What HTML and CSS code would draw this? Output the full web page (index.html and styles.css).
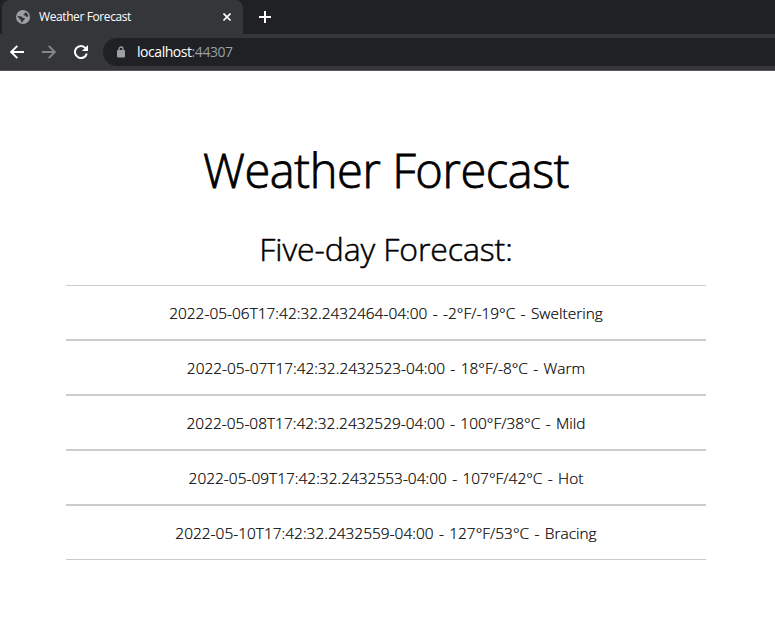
FILE: index.html
```
<!DOCTYPE html>
<html lang="en">
<head>
<meta charset="utf-8">
<title>Weather Forecast</title>
<link rel="stylesheet" href="styles.css">
</head>
<body>
<header class="browser">
  <div class="tabs">
    <div class="tab">
      <svg class="globe" width="14" height="14" viewBox="0 0 14 14"><circle cx="7" cy="7" r="7" fill="#9aa0a6"/><path d="M1.800 6 5.500 6.400 6.700 7.800 8.800 8 8.600 9.600 7.300 10.400 6.600 12.300 5 12 5 10 3.400 9.200 3.300 8 1.700 7.500ZM7.200 1.700 9.500 2 8.900 3.400 7.600 4 7.500 5.300 9.200 5.500 10 6.700 12.300 6.800 12.200 5 10.800 2.900 9.400 2Z" fill="#35363a"/></svg>
      <span class="tab-title">Weather Forecast</span>
      <svg class="close" width="8" height="8" viewBox="0 0 8 8"><path d="M.5.5l7 7M7.500.5l-7 7" stroke="#fff" stroke-width="1.6"/></svg>
    </div>
    <svg class="plus" width="12" height="12" viewBox="0 0 12 12"><path d="M6 0v12M0 6h12" stroke="#fff" stroke-width="2"/></svg>
  </div>
  <div class="toolbar">
    <svg class="nav" width="14" height="14" viewBox="0 0 14 14"><path d="M14 7H1.500M7.300.8 1.200 7l6.100 6.200" fill="none" stroke="#fff" stroke-width="1.900"/></svg>
    <svg class="nav" width="14" height="14" viewBox="0 0 14 14"><path d="M0 7h12.500M6.700.8 12.800 7l-6.100 6.200" fill="none" stroke="#85868a" stroke-width="1.900"/></svg>
    <svg class="nav reload" width="14" height="14" viewBox="0 0 14 14"><path d="M11.700 3.300A6 6 0 1 0 12.800 8.500" fill="none" stroke="#fff" stroke-width="2"/><path d="M14 0v6H8Z" fill="#fff"/></svg>
    <div class="address">
      <svg width="8" height="12" viewBox="0 0 8 12"><path d="M2 5V3a2 2 0 0 1 4 0v2" fill="none" stroke="#9aa0a6" stroke-width="1.300"/><rect y="4" width="8" height="7.500" rx="1" fill="#9aa0a6"/></svg>
      <span class="url"><span class="host">localhost</span><span class="port">:44307</span></span>
    </div>
  </div>
</header>
<main class="page">
  <h1>Weather Forecast</h1>
  <h2>Five-day Forecast:</h2>
  <ul class="forecast">
    <li>2022-05-06T17:42:32.2432464-04:00 - -2°F/-19°C - Sweltering</li>
    <li>2022-05-07T17:42:32.2432523-04:00 - 18°F/-8°C - Warm</li>
    <li>2022-05-08T17:42:32.2432529-04:00 - 100°F/38°C - Mild</li>
    <li>2022-05-09T17:42:32.2432553-04:00 - 107°F/42°C - Hot</li>
    <li>2022-05-10T17:42:32.2432559-04:00 - 127°F/53°C - Bracing</li>
  </ul>
</main>
</body>
</html>
```
FILE: styles.css
```
* { box-sizing: border-box; }
body { margin: 0; background: #fff; color: #000; font-family: "Open Sans", "Noto Sans", sans-serif; overflow: hidden; }
svg { display: block; flex: none; }
.browser { height: 71px; background: #35363a; border-bottom: 1px solid #5b565d; }
.tabs { display: flex; align-items: center; height: 34px; background: #202124; }
.tab { display: flex; align-items: center; width: 241px; height: 34px; margin-left: 2px; padding: 0 12px 0 14px; background: #35363a; border-radius: 8px 8px 0 0; }
.tab-title { margin-left: 9px; flex: 1; color: #fff; font-size: 12px; letter-spacing: -0.4px; line-height: 16px; padding-bottom: 1px; white-space: nowrap; }
.plus { margin-left: 16px; }
.toolbar { display: flex; align-items: center; height: 36px; padding-left: 10px; }
.nav { margin-right: 18px; }
.reload { margin-right: 15px; }
.address { display: flex; align-items: center; flex: 1; height: 28px; padding-left: 14px; background: #202124; border-radius: 14px 0 0 14px; }
.url { margin-left: 12px; padding-bottom: 1px; font-size: 14px; letter-spacing: -0.45px; color: #fff; }
.port { color: #9aa0a6; }
.page { width: 640px; margin: 0 auto; position: relative; left: -1.5px; padding-top: 67px; text-align: center; }
h1, h2 { margin: 0; font-weight: 300; white-space: nowrap; }
h1 { font-size: 47px; line-height: 65px; letter-spacing: -0.4px; -webkit-text-stroke: 0.8px #000; }
h2 { margin-top: 24px; font-size: 32px; line-height: 44px; letter-spacing: -0.1px; -webkit-text-stroke: 0.5px #000; }
.forecast { list-style: none; margin: 14px 0 0; padding: 0; }
.forecast li { height: 55px; padding-top: 1px; border: solid #ccc; border-width: 1px 0; font-size: 15.400px; font-weight: 300; line-height: 54px; letter-spacing: 0.03px; word-spacing: 1.300px; -webkit-text-stroke: 0.2px #000; white-space: nowrap; }
```
